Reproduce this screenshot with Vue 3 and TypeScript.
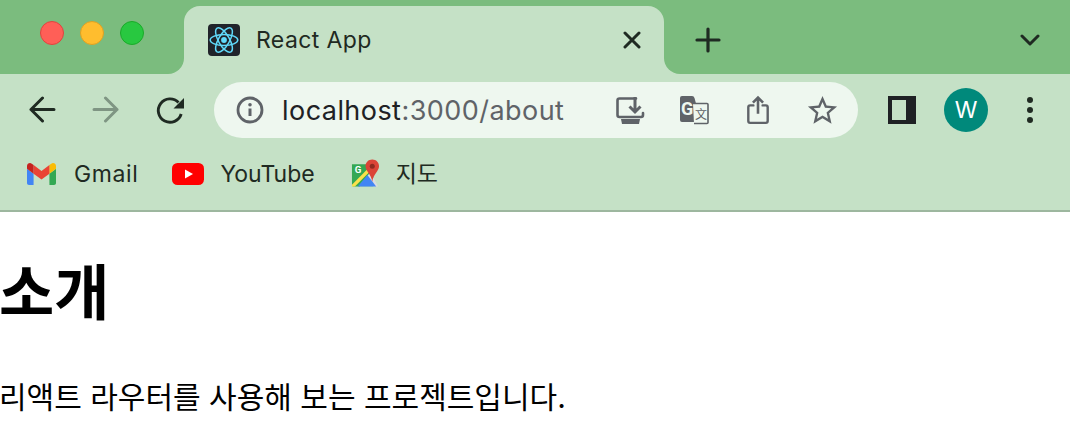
<script setup lang="ts">
const title: string = 'React App'
</script>

<template>
  <div class="page">
    <header class="chrome">
      <div class="tabstrip">
        <div class="lights">
          <span class="light red"></span>
          <span class="light yellow"></span>
          <span class="light green"></span>
        </div>
        <div class="tab">
          <svg class="favicon" width="32" height="32" viewBox="0 0 32 32">
            <rect width="32" height="32" rx="4" fill="#20232a" />
            <circle cx="16" cy="16" r="2.9" fill="#61dafb" />
            <g fill="none" stroke="#61dafb" stroke-width="1.5">
              <ellipse cx="16" cy="16" rx="13.8" ry="5.5" />
              <ellipse cx="16" cy="16" rx="13.8" ry="5.5" transform="rotate(60 16 16)" />
              <ellipse cx="16" cy="16" rx="13.8" ry="5.5" transform="rotate(120 16 16)" />
            </g>
          </svg>
          <span class="tab-title">{{ title }}</span>
          <svg class="tab-close" width="18" height="18" viewBox="0 0 18 18">
            <path d="M2 2 16 16M16 2 2 16" stroke="#1f2a22" stroke-width="3" stroke-linecap="round" />
          </svg>
        </div>
        <div class="strip-rest">
          <svg class="plus" width="26" height="26" viewBox="0 0 26 26">
            <path d="M13 2V24M2 13H24" stroke="#1f2a22" stroke-width="3.2" stroke-linecap="round" />
          </svg>
          <svg class="chevron" width="20" height="12" viewBox="0 0 20 12">
            <path d="M2 2 10 10 18 2" fill="none" stroke="#1f2a22" stroke-width="3" stroke-linecap="round" stroke-linejoin="round" />
          </svg>
        </div>
      </div>

      <div class="toolbar">
        <div class="cell">
          <svg width="28" height="28" viewBox="0 0 28 28">
            <path d="M26 13.5H3M14.5 2 3 13.5 14.5 25" fill="none" stroke="#1f2a22" stroke-width="3" stroke-linecap="round" stroke-linejoin="round" />
          </svg>
        </div>
        <div class="cell">
          <svg width="28" height="28" viewBox="0 0 28 28">
            <path d="M2 13.5H25M13.5 2 25 13.5 13.5 25" fill="none" stroke="#7f9583" stroke-width="3" stroke-linecap="round" stroke-linejoin="round" />
          </svg>
        </div>
        <div class="cell">
          <svg width="40" height="40" viewBox="0 0 40 40">
            <path d="M28.5 12.5A11.7 11.7 0 1 0 31.2 24" fill="none" stroke="#1f2a22" stroke-width="2.9" />
            <path d="M34 8V18.5H23.5Z" fill="#1f2a22" />
          </svg>
        </div>

        <div class="omnibox">
          <svg class="info" width="28" height="28" viewBox="0 0 28 28">
            <circle cx="14" cy="14" r="12" fill="none" stroke="#5f6368" stroke-width="2.8" />
            <circle cx="14" cy="8.8" r="1.8" fill="#5f6368" />
            <path d="M14 12.5V20" stroke="#5f6368" stroke-width="3" />
          </svg>
          <span class="url"><span class="host">localhost</span>:3000/about</span>
          <div class="omni-actions">
            <div class="cell">
              <svg width="30" height="30" viewBox="0 0 30 30">
                <path d="M21 3.5H4.5Q2.5 3.5 2.5 5.5V20Q2.5 22 4.5 22H26Q28 22 28 20V18" fill="none" stroke="#5f6368" stroke-width="2.6" stroke-linecap="round" />
                <path d="M20 2V16.5M14.5 11.5 20 17 25.5 11.5" fill="none" stroke="#5f6368" stroke-width="3" />
                <path d="M6 24H25L24 29H7Z" fill="#5f6368" />
              </svg>
            </div>
            <div class="cell">
              <svg width="30" height="30" viewBox="0 0 30 30">
                <path d="M3 1H13Q15 1 15.5 3L22 27H3Q1 27 1 25V3Q1 1 3 1Z" fill="#5f6368" />
                <path d="M14 8.5H28Q29 8.5 29 9.5V27.5Q29 28.5 28 28.5H15" fill="#eef7ef" stroke="#5f6368" stroke-width="1.6" />
                <text x="2" y="19.5" class="glyph-g">G</text>
                <text x="16" y="24" class="glyph-tr">文</text>
              </svg>
            </div>
            <div class="cell">
              <svg width="24" height="32" viewBox="0 0 26 32">
                <path d="M8 11H4.5Q2.5 11 2.5 13V28Q2.5 30 4.5 30H21.5Q23.5 30 23.5 28V13Q23.5 11 21.5 11H18" fill="none" stroke="#5f6368" stroke-width="2.6" stroke-linecap="round" />
                <path d="M13 20V3M7.5 8 13 2.5 18.5 8" fill="none" stroke="#5f6368" stroke-width="2.8" />
              </svg>
            </div>
            <div class="cell">
              <svg width="35" height="35" viewBox="0 0 24 24">
                <path fill="#5f6368" d="M22 9.24l-7.19-.62L12 2 9.19 8.63 2 9.24l5.46 4.73L5.82 21 12 17.27 18.18 21l-1.63-7.03L22 9.24zM12 15.4l-3.76 2.27 1-4.28-3.32-2.88 4.38-.38L12 6.1l1.71 4.04 4.38.38-3.32 2.88 1 4.28L12 15.4z" />
              </svg>
            </div>
          </div>
        </div>

        <div class="cell side-panel">
          <svg width="28" height="28" viewBox="0 0 28 28">
            <path fill="#1f2124" fill-rule="evenodd" d="M0 0H28V28H0ZM4 4V24H18V4Z" />
          </svg>
        </div>
        <div class="cell">
          <span class="avatar">W</span>
        </div>
        <div class="cell">
          <span class="dots"><i></i><i></i><i></i></span>
        </div>
      </div>

      <nav class="bookmarks">
        <div class="bookmark gmail">
          <svg width="29" height="22" viewBox="52 42 88 66">
            <path fill="#4285f4" d="M58 108h14V74L52 59v43c0 3.32 2.69 6 6 6" />
            <path fill="#34a853" d="M120 108h14c3.32 0 6-2.69 6-6V59l-20 15" />
            <path fill="#fbbc04" d="M120 48v26l20-15v-8c0-7.42-8.47-11.65-14.4-7.2" />
            <path fill="#ea4335" d="M72 74V48l24 18 24-18v26L96 92" />
            <path fill="#c5221f" d="M52 51v8l20 15V48l-5.6-4.2c-5.94-4.45-14.4-.22-14.4 7.2" />
          </svg>
          <span>Gmail</span>
        </div>
        <div class="bookmark youtube">
          <svg width="32" height="22" viewBox="0 0 32 22">
            <rect width="32" height="22" rx="5.5" fill="#ff0000" />
            <path d="M13 6.5V15.5L21 11Z" fill="#fff" />
          </svg>
          <span>YouTube</span>
        </div>
        <div class="bookmark maps">
          <svg width="29" height="30" viewBox="0 0 30 30">
            <path d="M1 5H23V28H3Q1 28 1 26Z" fill="#34a853" />
            <path d="M9 28 20 13 28 28Z" fill="#dadce0" />
            <path d="M7 28 17 16 26 28Z" fill="#4285f4" />
            <path d="M1 26 22 5H25V7L4 28H1Z" fill="#fbe14b" />
            <text x="4" y="14" class="glyph-map">G</text>
            <path d="M22 0C18 0 15 3 15 7C15 12 21 15 22 23C23 15 29 12 29 7C29 3 26 0 22 0Z" fill="#db4437" />
            <circle cx="22" cy="7" r="2.6" fill="#8e2a20" />
          </svg>
          <span class="ko">지도</span>
        </div>
      </nav>
    </header>

    <main class="content">
      <h1>소개</h1>
      <p>리액트 라우터를 사용해 보는 프로젝트입니다.</p>
    </main>
  </div>
</template>

<style>
html, body { margin: 0; background: #fff; overflow: hidden; }
</style>

<style scoped>
.page {
  width: 1070px;
  height: 448px;
  overflow: hidden;
  font-family: Inter, "Noto Sans CJK KR", sans-serif;
  color: #000;
}
.chrome {
  background: #c5e1c6;
  border-bottom: 2px solid #9db79f;
}
.tabstrip {
  display: flex;
  height: 74px;
  background: linear-gradient(#7bbc7e 50%, #c5e1c6 50%);
}
.lights {
  width: 184px;
  box-sizing: border-box;
  padding: 21px 0 0 40px;
  display: flex;
  gap: 16px;
  background: #7bbc7e;
  border-bottom-right-radius: 16px;
}
.light {
  width: 24px;
  height: 24px;
  box-sizing: border-box;
  border-radius: 50%;
  border: 1px solid;
}
.red { background: #ff5f57; border-color: #e0443e; }
.yellow { background: #ffbd2e; border-color: #dea123; }
.green { background: #28c840; border-color: #1aab29; }
.tab {
  width: 480px;
  margin-top: 6px;
  box-sizing: border-box;
  padding: 18px 23px 0 24px;
  display: flex;
  align-items: flex-start;
  background: #c5e1c6;
  border-radius: 16px 16px 0 0;
}
.favicon { flex: none; }
.tab-title {
  margin-left: 16px;
  font-size: 23px;
  letter-spacing: 0.4px;
  line-height: 32px;
  color: #1f2a22;
}
.tab-close { margin: 7px 0 0 auto; }
.strip-rest {
  flex: 1;
  display: flex;
  align-items: flex-start;
  background: #7bbc7e;
  border-bottom-left-radius: 16px;
  padding: 27px 30px 0 31px;
}
.chevron { margin: 7px 0 0 auto; }
.toolbar {
  display: flex;
  align-items: center;
  height: 72px;
  padding-left: 10px;
}
.cell {
  width: 64px;
  height: 56px;
  flex: none;
  display: flex;
  align-items: center;
  justify-content: center;
}
.omnibox {
  width: 644px;
  height: 56px;
  margin-left: 12px;
  padding: 0 4px 0 22px;
  box-sizing: border-box;
  display: flex;
  align-items: center;
  border-radius: 28px;
  background: #eef7ef;
}
.info { flex: none; }
.url {
  margin-left: 18px;
  font-size: 27px;
  letter-spacing: 0.45px;
  color: #5f6368;
  white-space: nowrap;
}
.host { color: #202124; }
.omni-actions { display: flex; margin-left: auto; }
.glyph-g { font: 700 18px Roboto, sans-serif; fill: #eef7ef; }
.glyph-tr { font: 12px "Noto Sans CJK SC", sans-serif; fill: #5f6368; }
.glyph-map { font: 700 10px Roboto, sans-serif; fill: #fff; }
.side-panel { margin-left: 12px; }
.avatar {
  width: 44px;
  height: 44px;
  border-radius: 50%;
  background: #00897b;
  color: #fff;
  font: 23px/44px Inter, sans-serif;
  text-align: center;
}
.dots { display: flex; flex-direction: column; gap: 4px; }
.dots i { width: 6px; height: 6px; border-radius: 50%; background: #1f2a22; }
.bookmarks {
  display: flex;
  align-items: center;
  height: 64px;
  padding: 0 0 8px 27px;
  box-sizing: border-box;
}
.bookmark {
  display: flex;
  align-items: center;
  font-size: 23px;
  color: #1f2a22;
  white-space: nowrap;
}
.gmail span { margin-left: 18px; letter-spacing: 0.6px; }
.youtube { margin-left: 34px; }
.youtube span { margin-left: 16px; }
.maps { margin-left: 36px; }
.maps span { margin-left: 16px; }
.maps .ko { margin-bottom: 4px; }
.content h1 {
  margin: 38px 0 0 -1px;
  font-size: 60px;
  line-height: 86px;
  font-weight: 700;
}
.content p {
  margin: 39px 0 0 -1px;
  font-size: 30px;
  line-height: 44px;
  white-space: nowrap;
}
</style>
